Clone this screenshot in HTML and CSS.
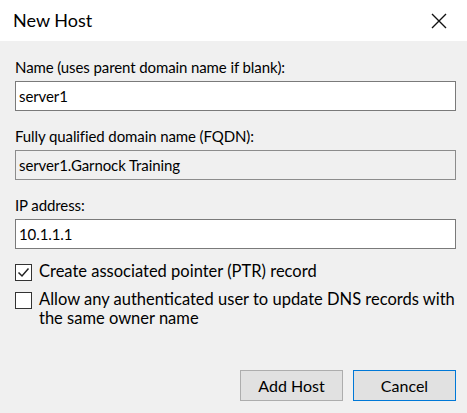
FILE: index.html
```html
<!DOCTYPE html>
<html>
<head>
<meta charset="utf-8">
<link rel="stylesheet" href="styles.css">
</head>
<body>
<div class="dialog">
  <div class="titlebar">
    <span class="title">New Host</span>
    <svg class="close" width="16" height="16" viewBox="0 0 16 16"><path d="M1 1 L15 15 M15 1 L1 15" stroke="#111" stroke-width="1.4" fill="none"/></svg>
  </div>
  <div class="content">
    <div class="field">
      <div class="label">Name (uses parent domain name if blank):</div>
      <div class="input">server1</div>
    </div>
    <div class="field">
      <div class="label">Fully qualified domain name (FQDN):</div>
      <div class="input disabled">server1.Garnock Training</div>
    </div>
    <div class="field">
      <div class="label">IP address:</div>
      <div class="input">10.1.1.1</div>
    </div>
    <div class="checks">
      <div class="check">
        <span class="box"><svg width="15" height="15" viewBox="0 0 15 15"><path d="M2.5 7.5 L6 11 L12.5 3.5" stroke="#222" stroke-width="1.5" fill="none"/></svg></span>
        <span class="ctext">Create associated pointer (PTR) record</span>
      </div>
      <div class="check">
        <span class="box"></span>
        <span class="ctext">Allow any authenticated user to update DNS records with<br>the same owner name</span>
      </div>
    </div>
    <div class="buttons">
      <div class="btn">Add Host</div>
      <div class="btn default">Cancel</div>
    </div>
  </div>
</div>
</body>
</html>
```

FILE: styles.css
```css
html, body {
  margin: 0;
  padding: 0;
  background: #f0f0f0;
}
.dialog {
  width: 467px;
  height: 413px;
  font-family: Lato, "Liberation Sans", Arial, sans-serif;
  font-size: 15px;
  letter-spacing: -0.1px;
  color: #000;
  background: #f0f0f0;
  display: flex;
  flex-direction: column;
}
.titlebar {
  height: 41px;
  background: #fff;
  display: flex;
  align-items: center;
  justify-content: space-between;
  padding: 0 20px 0 13px;
}
.title {
  font-size: 18px;
  letter-spacing: 0;
  color: #000;
  margin-top: -1px;
}
.close {
  display: block;
}
.content {
  flex: 1;
  padding: 17px 11px 0 15px;
  display: flex;
  flex-direction: column;
}
.field {
  display: flex;
  flex-direction: column;
  margin-bottom: 16px;
}
.label {
  line-height: 18px;
  margin-bottom: 5px;
}
.input {
  height: 28px;
  border: 1px solid #7a7a7a;
  background: #fff;
  padding: 0 3px;
  display: flex;
  align-items: center;
  font-size: 15px;
}
.input.disabled {
  background: #f0f0f0;
  border-color: #8c8c8c;
}
.checks {
  margin-top: -2px;
  display: flex;
  flex-direction: column;
  gap: 10px;
}
.check {
  display: flex;
  align-items: flex-start;
  gap: 7px;
}
.box {
  width: 15px;
  height: 15px;
  border: 1px solid #333;
  background: #fff;
  flex: none;
  margin-top: 1px;
}
.box svg {
  display: block;
  width: 15px;
  height: 15px;
}
.ctext {
  font-size: 16.5px;
  letter-spacing: 0;
  line-height: 19px;
  margin-top: -1px;
}
.buttons {
  margin-top: auto;
  margin-bottom: 12px;
  display: flex;
  justify-content: flex-end;
  gap: 10px;
}
.btn {
  width: 101px;
  height: 29px;
  border: 1px solid #adadad;
  background: #e1e1e1;
  font-size: 16px;
  letter-spacing: 0;
  display: flex;
  align-items: center;
  justify-content: center;
}
.btn.default {
  border-color: #0078d7;
}
```
